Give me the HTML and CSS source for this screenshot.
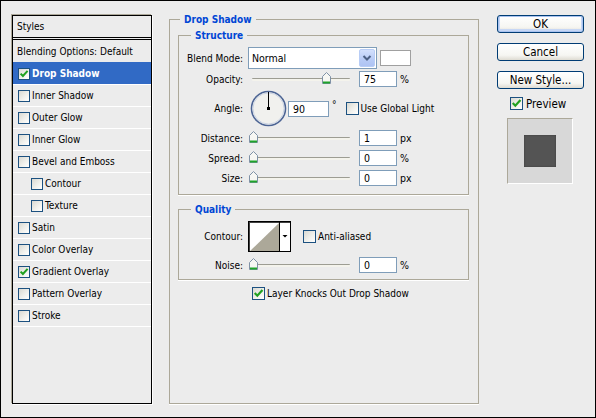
FILE: index.html
```html
<!DOCTYPE html>
<html>
<head>
<meta charset="utf-8">
<title>Layer Style</title>
<link rel="stylesheet" href="styles.css">
</head>
<body>
<div class="window">
  <div class="styles-list">
    <div class="list-head">Styles</div>
    <div class="item first">Blending Options: Default</div>
    <div class="item selected"><span class="cb"><svg viewBox="0 0 10 10"><path d="M1.6 4.6 L3.9 7 L8.6 1.8" fill="none" stroke="#21a121" stroke-width="2"/></svg></span>Drop Shadow</div>
    <div class="item"><span class="cb"></span>Inner Shadow</div>
    <div class="item"><span class="cb"></span>Outer Glow</div>
    <div class="item"><span class="cb"></span>Inner Glow</div>
    <div class="item"><span class="cb"></span>Bevel and Emboss</div>
    <div class="item sub"><span class="cb"></span>Contour</div>
    <div class="item sub"><span class="cb"></span>Texture</div>
    <div class="item"><span class="cb"></span>Satin</div>
    <div class="item"><span class="cb"></span>Color Overlay</div>
    <div class="item"><span class="cb"><svg viewBox="0 0 10 10"><path d="M1.6 4.6 L3.9 7 L8.6 1.8" fill="none" stroke="#21a121" stroke-width="2"/></svg></span>Gradient Overlay</div>
    <div class="item"><span class="cb"></span>Pattern Overlay</div>
    <div class="item last"><span class="cb"></span>Stroke</div>
  </div>

  <fieldset class="frame">
    <legend>Drop Shadow</legend>

    <fieldset class="group structure">
      <legend>Structure</legend>
      <div class="row r-blend">
        <span class="lbl">Blend Mode:</span>
        <div class="select">
          <span class="select-text">Normal</span>
          <span class="drop-btn"><svg width="14" height="16" viewBox="0 0 14 16"><path d="M3.5 6 L7 9.5 L10.5 6" fill="none" stroke="#4d6185" stroke-width="2"/></svg></span>
        </div>
        <span class="swatch"></span>
      </div>
      <div class="row r-opacity">
        <span class="lbl">Opacity:</span>
        <div class="slider"><div class="track"><span class="thumb" style="left: calc(75% - 3.5px)"><svg width="9" height="12" viewBox="0 0 9 12"><path d="M0.5 4.5 L4.5 0.5 L8.5 4.5 V11.5 H0.5 Z" fill="#f7f7f3" stroke="#7f91a6"/><path d="M1 10.5 H8" stroke="#1fa32a" stroke-width="2"/></svg></span></div></div>
        <span class="num">75</span><span class="unit">%</span>
      </div>
      <div class="row r-angle">
        <span class="lbl">Angle:</span>
        <span class="dial"><svg width="37" height="37" viewBox="0 0 37 37"><circle cx="18.5" cy="18.5" r="17" fill="#f1f1ee" stroke="#4c6494" stroke-width="1.6"/><circle cx="18.5" cy="18.5" r="15.6" fill="none" stroke="#c9d2e2" stroke-width="1"/><line x1="18.5" y1="18.5" x2="18.5" y2="2" stroke="#000" stroke-width="1"/><rect x="17" y="17" width="3" height="3" fill="#000"/></svg></span>
        <span class="num angle-num">90</span><span class="deg">°</span>
        <span class="cb big global-cb"></span><span class="cb-text">Use Global Light</span>
      </div>
      <div class="row r-dist">
        <span class="lbl">Distance:</span>
        <div class="slider"><div class="track"><span class="thumb" style="left: calc(0% - 3.5px)"><svg width="9" height="12" viewBox="0 0 9 12"><path d="M0.5 4.5 L4.5 0.5 L8.5 4.5 V11.5 H0.5 Z" fill="#f7f7f3" stroke="#7f91a6"/><path d="M1 10.5 H8" stroke="#1fa32a" stroke-width="2"/></svg></span></div></div>
        <span class="num">1</span><span class="unit">px</span>
      </div>
      <div class="row r-spread">
        <span class="lbl">Spread:</span>
        <div class="slider"><div class="track"><span class="thumb" style="left: calc(0% - 3.5px)"><svg width="9" height="12" viewBox="0 0 9 12"><path d="M0.5 4.5 L4.5 0.5 L8.5 4.5 V11.5 H0.5 Z" fill="#f7f7f3" stroke="#7f91a6"/><path d="M1 10.5 H8" stroke="#1fa32a" stroke-width="2"/></svg></span></div></div>
        <span class="num">0</span><span class="unit">%</span>
      </div>
      <div class="row r-size">
        <span class="lbl">Size:</span>
        <div class="slider"><div class="track"><span class="thumb" style="left: calc(0% - 3.5px)"><svg width="9" height="12" viewBox="0 0 9 12"><path d="M0.5 4.5 L4.5 0.5 L8.5 4.5 V11.5 H0.5 Z" fill="#f7f7f3" stroke="#7f91a6"/><path d="M1 10.5 H8" stroke="#1fa32a" stroke-width="2"/></svg></span></div></div>
        <span class="num">0</span><span class="unit">px</span>
      </div>
    </fieldset>

    <fieldset class="group quality">
      <legend>Quality</legend>
      <div class="row r-contour">
        <span class="lbl">Contour:</span>
        <span class="contour"><svg width="43" height="31" viewBox="0 0 43 31"><rect x="0.5" y="0.5" width="42" height="30" fill="#fff" stroke="#000"/><line x1="1" y1="1.5" x2="42" y2="1.5" stroke="#404040"/><line x1="1.5" y1="1" x2="1.5" y2="30" stroke="#404040"/><polygon points="2,30 31,2 31,30" fill="#aca899"/><line x1="31.5" y1="1" x2="31.5" y2="30" stroke="#000"/><polygon points="34.5,14 39.5,14 37,16.5" fill="#000"/></svg></span>
        <span class="cb big aa-cb"></span><span class="cb-text">Anti-aliased</span>
      </div>
      <div class="row r-noise">
        <span class="lbl">Noise:</span>
        <div class="slider"><div class="track"><span class="thumb" style="left: calc(0% - 3.5px)"><svg width="9" height="12" viewBox="0 0 9 12"><path d="M0.5 4.5 L4.5 0.5 L8.5 4.5 V11.5 H0.5 Z" fill="#f7f7f3" stroke="#7f91a6"/><path d="M1 10.5 H8" stroke="#1fa32a" stroke-width="2"/></svg></span></div></div>
        <span class="num">0</span><span class="unit">%</span>
      </div>
    </fieldset>

    <div class="knock">
      <span class="cb big"><svg viewBox="0 0 10 10"><path d="M1.6 4.6 L3.9 7 L8.6 1.8" fill="none" stroke="#21a121" stroke-width="2"/></svg></span><span class="cb-text">Layer Knocks Out Drop Shadow</span>
    </div>
  </fieldset>

  <div class="side">
    <div class="btn default">OK</div>
    <div class="btn">Cancel</div>
    <div class="btn">New Style...</div>
    <div class="preview-row">
      <span class="cb big"><svg viewBox="0 0 10 10"><path d="M1.6 4.6 L3.9 7 L8.6 1.8" fill="none" stroke="#21a121" stroke-width="2"/></svg></span><span class="cb-text">Preview</span>
    </div>
    <div class="preview-box"><span class="preview-square"></span></div>
  </div>
</div>
</body>
</html>
```
FILE: styles.css
```css
html, body {
  margin: 0;
  padding: 0;
  background: #ececec;
}

.window {
  width: 596px;
  height: 418px;
  box-sizing: border-box;
  border: 1px solid #000;
  background: #ececec;
  display: flex;
  align-items: flex-start;
  padding: 12px 0 0 11px;
  font-family: "DejaVu Sans Condensed", "DejaVu Sans", "Liberation Sans", sans-serif;
  font-stretch: condensed;
  font-size: 10px;
  color: #000;
}

/* ---------- left styles list ---------- */
.styles-list {
  margin-top: 2px;
  width: 140px;
  height: 389px;
  box-sizing: border-box;
  border: 1px solid #000;
  box-shadow: -1px -1px 0 #aca899, 1px 1px 0 #fff;
  flex: none;
}

.list-head {
  height: 21px;
  line-height: 21px;
  padding-left: 4px;
  border-bottom: 3px double #000;
}

.item {
  height: 21px;
  display: flex;
  align-items: center;
  padding-left: 5px;
  border-top: 1px solid #fff;
  white-space: nowrap;
}

.item.first {
  border-top: 0;
  height: 22px;
  padding-left: 4px;
}

.item.sub {
  padding-left: 18px;
}

.item.last {
  border-bottom: 1px solid #fff;
}

.item.selected {
  background: #316ac5;
  border-top-color: #316ac5;
  color: #fff;
  font-weight: bold;
}

.cb {
  flex: none;
  width: 12px;
  height: 12px;
  box-sizing: border-box;
  border: 1px solid #1c5180;
  background: linear-gradient(135deg, #d9d9d2 0%, #f2f2ee 60%, #fff 100%);
  display: inline-flex;
  margin-right: 2px;
}

.cb svg {
  width: 100%;
  height: 100%;
  display: block;
}

.cb.big {
  width: 13px;
  height: 13px;
}

.cb-text {
  white-space: nowrap;
}

/* ---------- middle frame ---------- */
.frame {
  flex: none;
  margin: 0 0 0 17px;
  padding: 0;
  width: 310px;
  height: 391px;
  box-sizing: border-box;
  border: 1px solid #aca899;
  box-shadow: 0 1px 0 #fff;
  min-width: 0;
}

.frame > legend {
  margin-left: 10px;
  padding: 0 4px;
  font-weight: bold;
  color: #0046d5;
  line-height: 13px;
}

.group {
  margin: 3px 0 0 8px;
  padding: 5px 0 8px 0;
  width: 291px;
  box-sizing: border-box;
  border: 1px solid #aca899;
  box-shadow: 0 1px 0 #fff;
  min-width: 0;
}

.group > legend {
  margin-left: 12px;
  padding: 0 4px;
  font-weight: bold;
  color: #0046d5;
  line-height: 13px;
}

.quality {
  margin-top: 8px;
  padding-bottom: 6px;
}

.row {
  display: flex;
  align-items: center;
  white-space: nowrap;
}

.lbl {
  flex: none;
  width: 64px;
  margin-right: 5px;
  text-align: right;
}

.r-blend { height: 22px; }
.r-opacity { height: 16px; margin-top: 2px; }
.r-angle { height: 37px; margin-top: 3px; }
.r-dist { height: 16px; margin-top: 3px; }
.r-spread, .r-size { height: 16px; margin-top: 4px; }
.r-contour { height: 31px; }
.r-noise { height: 16px; margin-top: 5px; }

/* select */
.select {
  flex: none;
  width: 129px;
  height: 22px;
  box-sizing: border-box;
  border: 1px solid #7f9db9;
  background: #fff;
  display: flex;
  align-items: center;
  justify-content: space-between;
}

.select-text {
  padding-left: 3px;
  font-size: 10.5px;
}

.drop-btn {
  width: 16px;
  height: 18px;
  margin-right: 1px;
  box-sizing: border-box;
  border: 1px solid #b8cdf6;
  border-radius: 2px;
  background: linear-gradient(#d3e0fd, #b8cbf6 60%, #aec3f3);
  display: flex;
  align-items: center;
  justify-content: center;
}

.drop-btn svg { display: block; }

.swatch {
  flex: none;
  width: 31px;
  height: 16px;
  margin-left: 3px;
  box-sizing: border-box;
  border: 1px solid #a0a0a0;
  background: #fff;
}

/* slider */
.slider {
  flex: none;
  width: 111px;
  height: 16px;
  display: flex;
  align-items: center;
}

.track {
  position: relative;
  margin-left: 4px;
  width: 98px;
  height: 3px;
  box-sizing: border-box;
  border-top: 1px solid #9d9d93;
  background: #f4f3ec;
  border-radius: 1px;
}

.thumb {
  position: absolute;
  top: -7px;
  width: 9px;
  height: 12px;
}

.thumb svg { display: block; }

.num {
  flex: none;
  width: 38px;
  height: 16px;
  box-sizing: border-box;
  border: 1px solid #7f9db9;
  background: #fff;
  padding-left: 4px;
  line-height: 14px;
  font-size: 10.5px;
}

.unit {
  margin-left: 3px;
  font-size: 10.5px;
}

/* angle */
.dial {
  flex: none;
  width: 37px;
  height: 37px;
  margin-left: 2px;
}

.dial svg { display: block; }

.angle-num {
  width: 41px;
  margin-left: 1px;
}

.deg {
  margin-left: 3px;
  align-self: flex-start;
  margin-top: 9px;
}

.global-cb {
  margin-left: 9px;
}

/* contour */
.contour {
  flex: none;
  width: 43px;
  height: 31px;
}

.contour svg { display: block; }

.aa-cb {
  margin-left: 12px;
}

.knock {
  margin: 7px 0 0 82px;
  height: 13px;
  display: flex;
  align-items: center;
}

/* ---------- right column ---------- */
.side {
  flex: none;
  margin: 2px 0 0 18px;
  width: 87px;
  display: flex;
  flex-direction: column;
  font-size: 11.5px;
}

.btn {
  height: 18px;
  box-sizing: border-box;
  border: 1px solid #003c74;
  border-radius: 3px;
  background: linear-gradient(#ffffff, #f6f6f2 70%, #dedbd2);
  text-align: center;
  line-height: 16px;
}

.btn + .btn {
  margin-top: 10px;
}

.btn.default {
  box-shadow: inset 0 0 0 1px #a9c3f0, inset 0 -1px 0 2px #c7d7f5;
}

.preview-row {
  margin-top: 8px;
  padding-left: 13px;
  height: 13px;
  display: flex;
  align-items: center;
}

.preview-row .cb {
  margin-right: 3px;
}

.preview-box {
  margin: 8px 0 0 10px;
  width: 66px;
  height: 66px;
  box-sizing: border-box;
  border: 1px solid;
  border-color: #aca899 #fff #fff #aca899;
  background: #d8d8d8;
  display: flex;
  align-items: center;
  justify-content: center;
}

.preview-square {
  width: 32px;
  height: 32px;
  background: #545454;
  box-shadow: inset 0 0 2px rgba(0, 0, 0, 0.35);
}
```
